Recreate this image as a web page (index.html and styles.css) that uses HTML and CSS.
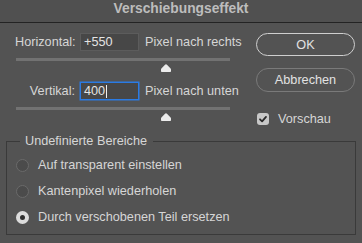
FILE: index.html
```html
<!DOCTYPE html>
<html lang="de">
<head>
    <meta charset="UTF-8">
    <meta name="viewport" content="width=device-width, initial-scale=1.0">
    <title>Verschiebungseffekt</title>
    <link rel="stylesheet" href="styles.css">
</head>
<body>

    <div class="titlebar">Verschiebungseffekt</div>

    <div class="main">
        <div class="controls">
            <div class="field">
                <span class="field-label">Horizontal:</span>
                <div class="input">+550</div>
                <span class="unit">Pixel nach rechts</span>
            </div>
            <div class="slider">
                <div class="track"></div>
                <svg class="thumb" style="margin-left: calc(70% - 6px)" width="12" height="8" viewBox="0 0 12 8">
                    <path d="M6 0.3 Q6.6 0.3 7.2 1 L10.6 4.6 Q11 5 11 5.6 L11 7.2 Q11 8 10.2 8 L1.8 8 Q1 8 1 7.2 L1 5.6 Q1 5 1.4 4.6 L4.8 1 Q5.4 0.3 6 0.3 Z" fill="#ececec"/>
                </svg>
            </div>

            <div class="field field-second">
                <span class="field-label">Vertikal:</span>
                <div class="input input-active">400<span class="caret"></span></div>
                <span class="unit">Pixel nach unten</span>
            </div>
            <div class="slider">
                <div class="track"></div>
                <svg class="thumb" style="margin-left: calc(70% - 6px)" width="12" height="8" viewBox="0 0 12 8">
                    <path d="M6 0.3 Q6.6 0.3 7.2 1 L10.6 4.6 Q11 5 11 5.6 L11 7.2 Q11 8 10.2 8 L1.8 8 Q1 8 1 7.2 L1 5.6 Q1 5 1.4 4.6 L4.8 1 Q5.4 0.3 6 0.3 Z" fill="#ececec"/>
                </svg>
            </div>
        </div>

        <div class="side">
            <button class="btn btn-primary">OK</button>
            <button class="btn">Abbrechen</button>
            <div class="check">
                <span class="check-box">
                    <svg width="12" height="12" viewBox="0 0 12 12">
                        <path d="M3 6.3 L5.1 8.3 L9 3.9" fill="none" stroke="#2a2a2a" stroke-width="1.8" stroke-linecap="round" stroke-linejoin="round"/>
                    </svg>
                </span>
                <span>Vorschau</span>
            </div>
        </div>
    </div>

    <fieldset class="group">
        <legend>Undefinierte Bereiche</legend>
        <div class="radio"><span class="radio-dot"></span>Auf transparent einstellen</div>
        <div class="radio"><span class="radio-dot"></span>Kantenpixel wiederholen</div>
        <div class="radio"><span class="radio-dot radio-on"></span>Durch verschobenen Teil ersetzen</div>
    </fieldset>

</body>
</html>
```

FILE: styles.css
```css
body {
    margin: 0;
    background-color: #535353;
    font-family: "Liberation Sans", Arial, sans-serif;
    font-size: 12.7px;
    color: #d6d6d6;
}

.titlebar {
    height: 22px;
    line-height: 18px;
    text-align: center;
    font-size: 13.8px;
    font-weight: bold;
    color: #bdbdbd;
    background-color: #505050;
    border-bottom: 1px solid #232323;
}

.main {
    display: flex;
    padding: 10px 7px 0 15px;
}

.controls {
    width: 215px;
    flex-shrink: 0;
}
.field {
    display: flex;
    align-items: center;
    height: 18px;
    white-space: nowrap;
}
.field-second {
    margin-top: 10px;
}
.field-label {
    width: 60px;
    flex-shrink: 0;
    margin-right: 5px;
    text-align: right;
}
.input {
    width: 59px;
    height: 18px;
    flex-shrink: 0;
    box-sizing: border-box;
    padding-left: 3px;
    line-height: 16px;
    background-color: #474747;
    border: 1px solid #5c5c5c;
    color: #e4e4e4;
    display: flex;
    align-items: center;
}
.input-active {
    border: 1px solid #2a7be4;
    box-shadow: 0 0 0 0.5px #2a7be4;
}
.caret {
    display: inline-block;
    width: 1px;
    height: 13px;
    margin-left: 1px;
    background-color: #f0f0f0;
}
.unit {
    margin-left: 6px;
}

.slider {
    margin-top: 7px;
    margin-left: 1px;
    width: 214px;
}
.track {
    height: 3px;
    background-color: #727272;
}
.thumb {
    display: block;
    margin-top: 3px;
}

.side {
    width: 99px;
    flex-shrink: 0;
    margin-left: 26px;
    display: flex;
    flex-direction: column;
}
.btn {
    font-family: inherit;
    font-size: 12.7px;
    color: #e2e2e2;
    background-color: transparent;
    border: 1px solid #7a7a7a;
    border-radius: 12px;
    height: 24px;
    padding: 0;
    margin-top: 12px;
}
.btn-primary {
    height: 23px;
    margin-top: 0;
    border-color: #cfcfcf;
}
.check {
    display: flex;
    align-items: center;
    height: 12px;
    margin-top: 21px;
    margin-left: 1px;
}
.check-box {
    width: 12px;
    height: 12px;
    border-radius: 3px;
    background-color: #c8c8c8;
    margin-right: 9px;
    display: flex;
}

.group {
    margin: 8px 6px 0 6px;
    padding: 3px 0 4px 9px;
    border: 1px solid #3a3a3a;
}
.group legend {
    margin-left: 4px;
    padding: 0 6px 0 5px;
    line-height: 16px;
}
.radio {
    display: flex;
    align-items: center;
    height: 26px;
}
.radio-dot {
    width: 13px;
    height: 13px;
    box-sizing: border-box;
    border-radius: 50%;
    background-color: #4b4b4b;
    border: 1px solid #6a6a6a;
    margin-right: 9px;
}
.radio-on {
    border: 4.5px solid #dcdcdc;
    background-color: #2e2e2e;
}
```
